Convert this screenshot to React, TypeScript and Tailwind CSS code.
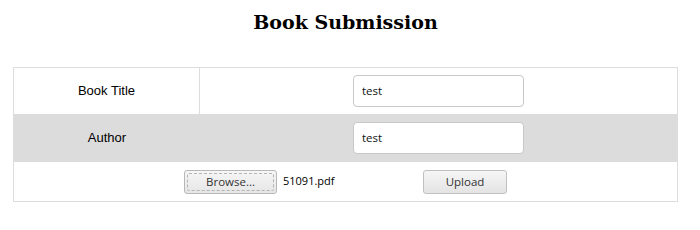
import React from "react";

export default function App() {
  const ui = { fontFamily: '"Open Sans", "DejaVu Sans", sans-serif' };
  return (
    <div className="w-[700px] h-[230px] bg-white">
      <h1
        className="pt-[9px] pr-[9px] h-[67px] text-center text-[19px] font-bold text-black leading-[26px]"
        style={{ fontFamily: '"DejaVu Serif", serif' }}
      >
        Book Submission
      </h1>
      <div className="mx-[13px] w-[665px] border border-[#dddddd]">
        <div className="flex h-[46px]">
          <div
            className="w-[186px] border-r border-[#dddddd] flex items-center justify-center text-[13px] text-black"
            style={{ fontFamily: '"Liberation Sans", Arial, sans-serif' }}
          >
            Book Title
          </div>
          <div className="flex-1 flex items-center justify-center">
            <div
              className="w-[171px] h-[32px] rounded-[4px] border border-[#c8c8c8] bg-white flex items-center pl-[8px] text-[11.5px] text-[#111]"
              style={ui}
            >
              test
            </div>
          </div>
        </div>
        <div className="flex h-[48px] bg-[#dcdcdc]">
          <div
            className="w-[186px] flex items-center justify-center text-[13px] text-black"
            style={{ fontFamily: '"Liberation Sans", Arial, sans-serif' }}
          >
            Author
          </div>
          <div className="flex-1 flex items-center justify-center">
            <div
              className="w-[171px] h-[32px] rounded-[4px] border border-[#c8c8c8] bg-white flex items-center pl-[8px] text-[11.5px] text-[#111]"
              style={ui}
            >
              test
            </div>
          </div>
        </div>
        <div className="flex h-[39px] items-center justify-center gap-[4px]" style={ui}>
          <div className="w-[235px] flex items-center">
            <div className="w-[93px] h-[24px] rounded-[3px] border border-[#b8b8b8] bg-gradient-to-b from-[#f6f6f6] to-[#e6e6e6] p-[2px]">
              <div className="w-full h-full border border-dashed border-[#b4b4b4] rounded-[2px] flex items-center justify-center text-[11.5px] text-[#333]">
                Browse...
              </div>
            </div>
            <span className="ml-[6px] text-[11px] text-black">51091.pdf</span>
          </div>
          <div className="w-[84px] h-[24px] rounded-[3px] border border-[#c0c0c0] bg-gradient-to-b from-[#f6f6f6] to-[#e4e4e4] flex items-center justify-center text-[11.5px] text-[#333]">
            Upload
          </div>
        </div>
      </div>
    </div>
  );
}
